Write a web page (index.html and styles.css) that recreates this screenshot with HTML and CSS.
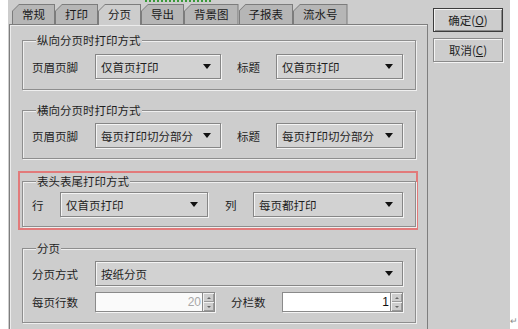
FILE: index.html
```html
<!DOCTYPE html>
<html lang="zh-CN">
<head>
    <meta charset="UTF-8">
    <title>分页设置</title>
    <link rel="stylesheet" href="styles.css">
</head>
<body>
    <div class="window">
        <div class="squiggle"></div>
        <div class="tabpane">
            <div class="tabstrip">
                <div class="tab"><span>常规</span></div>
                <div class="tab"><span>打印</span></div>
                <div class="tab active"><span>分页</span></div>
                <div class="tab"><span>导出</span></div>
                <div class="tab"><span>背景图</span></div>
                <div class="tab"><span>子报表</span></div>
                <div class="tab"><span>流水号</span></div>
            </div>
            <div class="panel">
                <fieldset class="group g1">
                    <legend>纵向分页时打印方式</legend>
                    <div class="row">
                        <label class="lbl w63">页眉页脚</label>
                        <div class="combo w126"><span>仅首页打印</span><i class="arrow"></i></div>
                        <label class="lbl lbl2 w39">标题</label>
                        <div class="combo grow"><span>仅首页打印</span><i class="arrow"></i></div>
                    </div>
                </fieldset>
                <fieldset class="group g2">
                    <legend>横向分页时打印方式</legend>
                    <div class="row">
                        <label class="lbl w63">页眉页脚</label>
                        <div class="combo w126"><span>每页打印切分部分</span><i class="arrow"></i></div>
                        <label class="lbl lbl2 w39">标题</label>
                        <div class="combo grow"><span>每页打印切分部分</span><i class="arrow"></i></div>
                    </div>
                </fieldset>
                <div class="mark">
                    <fieldset class="group g3">
                        <legend>表头表尾打印方式</legend>
                        <div class="row">
                            <label class="lbl w28">行</label>
                            <div class="combo w148"><span>仅首页打印</span><i class="arrow"></i></div>
                            <label class="lbl lbl3 w28">列</label>
                            <div class="combo grow"><span>每页都打印</span><i class="arrow"></i></div>
                        </div>
                    </fieldset>
                </div>
                <fieldset class="group g4">
                    <legend>分页</legend>
                    <div class="row">
                        <label class="lbl w63">分页方式</label>
                        <div class="combo grow"><span>按纸分页</span><i class="arrow"></i></div>
                    </div>
                    <div class="row row2">
                        <label class="lbl w63">每页行数</label>
                        <div class="spinner w120 disabled">
                            <span class="value">20</span>
                            <div class="spin"><b class="up"></b><b class="down"></b></div>
                        </div>
                        <label class="lbl lbl2 w51">分栏数</label>
                        <div class="spinner grow">
                            <span class="value">1</span>
                            <div class="spin"><b class="up"></b><b class="down"></b></div>
                        </div>
                    </div>
                </fieldset>
            </div>
        </div>
        <div class="buttons">
            <button class="btn focused">确定(<u>O</u>)</button>
            <button class="btn">取消(<u>C</u>)</button>
        </div>
    </div>
    <span class="pmark">↵</span>
</body>
</html>
```

FILE: styles.css
```css
* {
    box-sizing: border-box;
}
body {
    margin: 0;
    width: 518px;
    height: 329px;
    overflow: hidden;
    display: flex;
    background: #fff;
    font-family: "Noto Sans CJK SC", "Liberation Sans", sans-serif;
    font-size: 11.5px;
    color: #1e1e1e;
}
.window {
    position: relative;
    margin-left: 8px;
    width: 503px;
    height: 329px;
    padding-left: 1px;
    display: flex;
    background: #cdcdcd;
}
.squiggle {
    position: absolute;
    left: 137px;
    top: 0;
    width: 66px;
    border-top: 2px dotted #3a9a3a;
}
.pmark {
    align-self: flex-end;
    margin: 0 0 3px 0;
    font-size: 9px;
    line-height: 10px;
    color: #8a8a8a;
}

/* tabs */
.tabpane {
    width: 419px;
    display: flex;
    flex-direction: column;
}
.tabstrip {
    height: 20px;
    margin-top: 4px;
    padding-left: 3px;
    display: flex;
    align-items: flex-start;
}
.tab {
    height: 20px;
    padding: 1px 1px 0 1px;
    background: #7c7c7c;
    clip-path: polygon(0 100%, 0 7px, 7px 0, 100% 0, 100% 100%);
}
.tab span {
    display: block;
    height: 100%;
    padding: 0 9px 0 9px;
    line-height: 18px;
    color: #1a1a1a;
    background: #b6b6b6;
    clip-path: polygon(0 100%, 0 6px, 6px 0, 100% 0, 100% 100%);
}
.tab.active {
    position: relative;
    z-index: 1;
    height: 21px;
}
.tab.active span {
    background: #cdcdcd;
}
.panel {
    flex: 1;
    border: 1px solid #7e7e7e;
    border-bottom: none;
    box-shadow: inset 1px 1px 0 #ececec;
    padding: 7px 11px 0 12px;
}

/* groups */
.group {
    margin: 0;
    padding: 0 12px 10px 9px;
    border: 1px solid #8e8e8e;
    box-shadow: inset 1px 1px 0 #efefef, 1px 1px 0 #efefef;
}
.group legend {
    margin-left: 4px;
    padding: 0 1px;
    line-height: 16px;
    background: #cdcdcd;
}
.g1 .row {
    margin-top: 6px;
}
.g2 {
    margin-top: 12px;
}
.g2 .row {
    margin-top: 5px;
}
.mark {
    margin: 12px -2px 0 -4px;
    padding: 0 0 1px 2px;
    border: 2px solid #e27a7a;
}
.g3 {
    padding-bottom: 9px;
}
.g3 .row {
    margin-top: 3px;
}
.g4 {
    margin-top: 10px;
}
.g4 .row {
    margin-top: 5px;
}
.g4 .row2 {
    margin-top: 6px;
}
.row {
    display: flex;
    align-items: center;
}
.lbl {
    flex: none;
}
.lbl2 {
    margin-left: 16px;
}
.lbl3 {
    margin-left: 17px;
}
.w28 { width: 28px; }
.w39 { width: 39px; }
.w51 { width: 51px; }
.w63 { width: 63px; }
.w120 { width: 120px; flex: none; }
.w126 { width: 126px; flex: none; }
.w148 { width: 148px; flex: none; }
.grow {
    flex: 1;
}

/* combo box */
.combo {
    height: 25px;
    display: flex;
    align-items: center;
    justify-content: space-between;
    padding: 0 9px 0 5px;
    background: #d2d2d2;
    border: 1px solid #868686;
    box-shadow: inset 1px 1px 0 #f4f4f4, 1px 1px 0 #f4f4f4;
    white-space: nowrap;
}
.arrow {
    width: 0;
    height: 0;
    border-left: 4px solid transparent;
    border-right: 4px solid transparent;
    border-top: 5px solid #111;
}

/* spinner */
.spinner {
    height: 20px;
    display: flex;
    background: #fff;
    border: 1px solid #8a8a8a;
    box-shadow: 1px 1px 0 #f4f4f4;
}
.spinner .value {
    flex: 1;
    text-align: right;
    padding-right: 1px;
    line-height: 18px;
    font-family: "Liberation Sans", sans-serif;
    font-size: 12px;
    color: #111;
}
.spinner.disabled {
    background: #fafafa;
}
.spinner.disabled .value {
    color: #a8a8a8;
}
.spin {
    width: 12px;
    display: flex;
    flex-direction: column;
    border-left: 1px solid #8a8a8a;
}
.spin b {
    flex: 1;
    display: flex;
    align-items: center;
    justify-content: center;
    background: #cdcdcd;
    box-shadow: inset 1px 1px 0 #f2f2f2, inset -1px -1px 0 #9a9a9a;
}
.spin b::after {
    content: '';
    border-left: 2px solid transparent;
    border-right: 2px solid transparent;
}
.spin .up::after {
    border-bottom: 2px solid #666;
}
.spin .down::after {
    border-top: 2px solid #666;
}

/* buttons */
.buttons {
    margin: 8px 0 0 5px;
    display: flex;
    flex-direction: column;
    gap: 6px;
}
.btn {
    width: 70px;
    height: 24px;
    padding: 0;
    font-family: inherit;
    font-size: 11.5px;
    color: #1e1e1e;
    background: #cdcdcd;
    border: 1px solid #8a8a8a;
    box-shadow: inset 1px 1px 0 #f4f4f4, 1px 1px 0 #f4f4f4;
}
.btn.focused {
    border: 1px solid #3c3c3c;
    box-shadow: inset 1px 1px 0 #f4f4f4, inset -1px -1px 0 #8a8a8a;
}
.btn u {
    text-underline-offset: 1px;
}
```
